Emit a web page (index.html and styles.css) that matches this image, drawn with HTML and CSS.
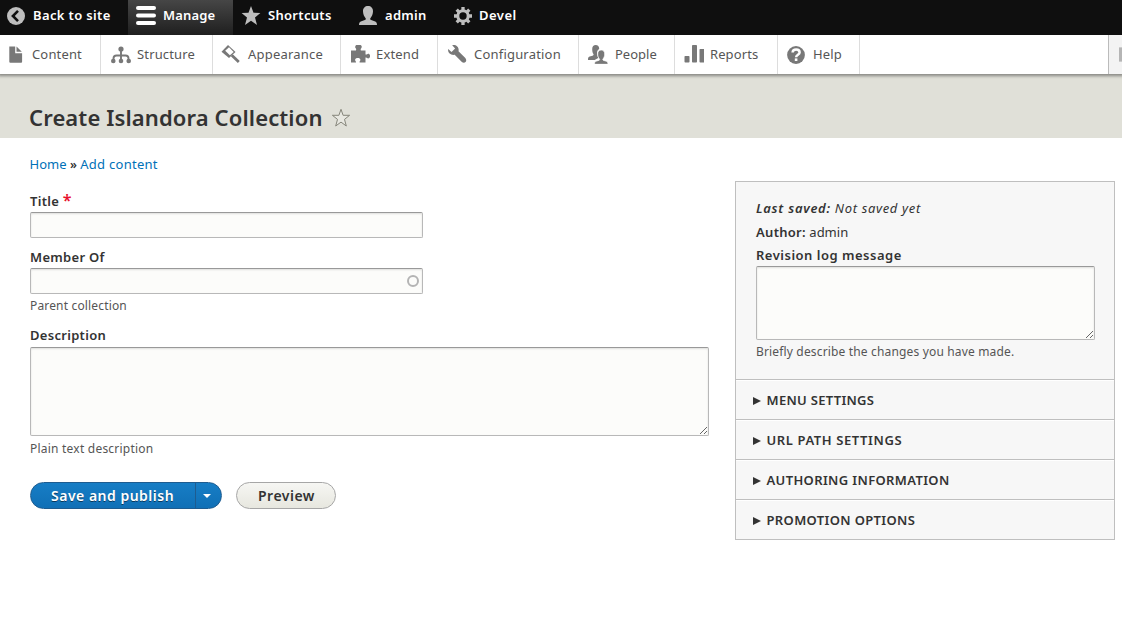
FILE: index.html
```html
<!DOCTYPE html>
<html lang="en">
<head>
<meta charset="utf-8">
<title>Create Islandora Collection</title>
<link rel="stylesheet" href="styles.css">
</head>
<body>
<nav class="bar">
  <a class="tab back"><svg class="icon" viewBox="0 0 20 20"><circle cx="10" cy="10" r="9"/><path d="M12 4.8 6.900 10l5.100 5.200" fill="none" stroke="#0f0f0f" stroke-width="2.600"/></svg><span>Back to site</span></a>
  <a class="tab manage active"><svg class="icon wide" viewBox="0 0 20 20"><rect y="0" width="20" height="4" rx="2"/><rect y="7.500" width="20" height="4" rx="2"/><rect y="15" width="20" height="4" rx="2"/></svg><span>Manage</span></a>
  <a class="tab shortcuts"><svg class="icon" viewBox="0 0 20 20"><path d="M10 0l2.500 6.800 6.900.2-5.400 4.400 2 7.600-6-4.300L4 19l2-7.600L.6 7l6.900-.2z"/></svg><span>Shortcuts</span></a>
  <a class="tab user"><svg class="icon" viewBox="0 0 20 20"><path d="M10 0c3 0 5 2 5 5.300 0 2.700-1.200 5.500-2.600 6.900-.5.800-.2 1.500.8 1.900l4 1.300c1.200.5 1.800 1.500 1.800 3.600H1c0-2.100.6-3.100 1.800-3.600l4-1.300c1-.4 1.300-1.100.8-1.900C6.200 10.800 5 8 5 5.300 5 2 7 0 10 0z"/></svg><span>admin</span></a>
  <a class="tab devel"><svg class="icon" viewBox="0 0 20 20"><circle cx="10" cy="10" r="5.200" fill="none" stroke="#bebebe" stroke-width="3"/><path d="M10 1v3.500M10 15.500V19M1 10h3.500M15.500 10H19M3.700 3.700l2.400 2.400M13.900 13.900l2.400 2.400M3.700 16.300l2.400-2.400M13.900 6.100l2.400-2.400" stroke="#bebebe" stroke-width="3.300"/></svg><span>Devel</span></a>
</nav>
<nav class="tray">
  <a class="item content"><svg class="icon" viewBox="0 0 20 20"><path d="M3.300 2.500h5.900v6.700h6.900v8.500q0 1-1 1H4.300q-1 0-1-1zM10.500 2.500l5.300 5.300h-5.300z"/></svg><span>Content</span></a>
  <a class="item structure"><svg class="icon" viewBox="0 0 20 20"><g fill="none" stroke="#787878" stroke-width="1.900"><path d="M10 5v12M2.500 17v-2.500q0-3 3-3h9q3 0 3 3V17"/></g><circle cx="10" cy="5" r="2.600"/><circle cx="2.300" cy="17" r="2.300"/><circle cx="10" cy="17" r="2.300"/><circle cx="17.700" cy="17" r="2.300"/></svg><span>Structure</span></a>
  <a class="item appearance"><svg class="icon" viewBox="0 0 20 20"><path d="M7 1l7.500 7L8 14 .5 7.700z"/><path d="M8 3.300l4.700 4.600-3.800 3.300-4.700-4.500z" fill="#fff"/><path d="M10.800 11.300l7 6.800" fill="none" stroke="#787878" stroke-width="2.800"/></svg><span>Appearance</span></a>
  <a class="item extend"><svg class="icon" viewBox="0 0 20 20"><path d="M1 6.500h4.900c.6-1.200.2-1.800-.6-2.700-.4-1 .2-2.300 1-2.800h4.300c1.200.7 1.500 2 .8 3-.7.700-1 1.600-.5 2.500h4.600v4c1.300.4 1.700-.8 2.600-.8 1.400 0 2 1.200 2 2.300s-.6 2.400-2 2.400c-.9 0-1.300-1.200-2.600-.8v4.900H9.700c-.7-1 .7-1.500.7-2.600 0-1.400-1.200-2-2.600-2s-2.700.6-2.700 2c0 1.100 1.400 1.600.8 2.600H1z"/></svg><span>Extend</span></a>
  <a class="item configuration"><svg class="icon" viewBox="0 0 20 20"><path d="M5.200 1.200c4-.9 7.200 2.200 6.300 6l6.800 6.900c2.600 3.100-.8 6.300-3.700 3.700l-6.900-7C3.800 11.700.4 8.400 1.200 5l3.300 3 3.600-3.500z"/></svg><span>Configuration</span></a>
  <a class="item people"><svg class="icon" viewBox="0 0 20 20"><path d="M4.200 5C4.200 2.400 5.600 1 7.700 1s3.600 1.400 3.500 4c-1.500.8-2.300 2.400-2.200 4.400.1 1.800.7 3.300 1.600 4.400L6.700 16H0c0-2 .4-3 1.600-3.400l3-.9c1-.3 1.200-1 .8-1.600C4.500 8.900 4.200 6.600 4.200 5z"/><path d="M13.200 6c2.200 0 3.500 1.600 3.500 4 0 2-.7 3.800-1.700 5-.4.600-.2 1.100.5 1.400l2.800.8c1 .4 1.700 1.300 1.700 3.100H6.500c0-1.800.5-2.700 1.600-3.100l2.800-.8c.8-.3.900-.8.500-1.400-1-1.200-1.700-3-1.700-5 0-2.400 1.400-4 3.500-4z" stroke="#fff" stroke-width=".7"/></svg><span>People</span></a>
  <a class="item reports"><svg class="icon" viewBox="0 0 20 20"><rect x=".5" y="12" width="5" height="6.500" rx=".8"/><rect x="8" y="1" width="5" height="17.500" rx=".8"/><rect x="15.500" y="5" width="5" height="13.500" rx=".8"/></svg><span>Reports</span></a>
  <a class="item help"><svg class="icon" viewBox="0 0 20 20"><circle cx="10" cy="11" r="8.900"/><path d="M6.600 8.500c.2-3.900 7-3.800 7 0 0 2.200-3.500 2.200-3.500 4.700" fill="none" stroke="#fff" stroke-width="2.500"/><rect x="8.800" y="14.400" width="2.600" height="2.600" fill="#fff"/></svg><span>Help</span></a>
  <div class="toggle"><div class="toggle-glyph"></div></div>
</nav>
<header class="page-header">
  <h1>Create Islandora Collection</h1>
  <svg class="fav" viewBox="0 0 20 20"><path d="M10 1.300l2.100 6h6.500l-5.100 4.100 1.800 6.600-5.300-3.900L4.700 18l1.800-6.600-5.100-4.100h6.500z" fill="#e8e8e1" stroke="#85857a" stroke-width="1"/></svg>
</header>
<div class="crumbs"><a>Home</a> <b>»</b> <a class="add">Add content</a></div>
<main class="layout">
  <form class="main">
    <label class="label title">Title <span class="required">*</span></label>
    <div class="field short"></div>
    <label class="label member">Member Of</label>
    <div class="field short auto"><i class="throbber"></i></div>
    <div class="hint parent">Parent collection</div>
    <label class="label desc">Description</label>
    <div class="field area"><svg class="grip" viewBox="0 0 9 9"><path d="M1 8l7-7M5 8l3-3"/></svg></div>
    <div class="hint plain">Plain text description</div>
    <div class="actions">
      <div class="split"><span class="save">Save and publish</span><span class="drop"><i></i></span></div>
      <div class="preview"><span>Preview</span></div>
    </div>
  </form>
  <aside class="side">
    <div class="meta">
      <p class="saved"><b>Last saved:</b> <span>Not saved yet</span></p>
      <p class="author"><b>Author:</b> admin</p>
      <label class="label log">Revision log message</label>
      <div class="field log-area"><svg class="grip" viewBox="0 0 9 9"><path d="M1 8l7-7M5 8l3-3"/></svg></div>
      <div class="hint brief">Briefly describe the changes you have made.</div>
    </div>
    <div class="group"><i></i><span class="g1">MENU SETTINGS</span></div>
    <div class="group"><i></i><span class="g2">URL PATH SETTINGS</span></div>
    <div class="group"><i></i><span class="g3">AUTHORING INFORMATION</span></div>
    <div class="group"><i></i><span class="g4">PROMOTION OPTIONS</span></div>
  </aside>
</main>
</body>
</html>
```
FILE: styles.css
```css
* { box-sizing: border-box; }
body { margin: 0; height: 617px; overflow: hidden; background: #fff; color: #333; font: 13px/20px "Noto Sans", "Open Sans", sans-serif; }
b, .label { font-weight: 700; }
span { white-space: nowrap; }
.bar { display: flex; height: 35px; background: #0f0f0f; color: #fff; font-weight: 600; }
.tab { display: flex; padding-top: 6px; height: 35px; }
.tab span { margin-top: -1px; }
.tab .icon { fill: #bebebe; }
.icon { width: 20px; height: 20px; flex: none; }
.back { width: 128px; padding-left: 6px; gap: 7px; letter-spacing: .36px; }
.manage { width: 105px; padding-left: 8px; gap: 7px; letter-spacing: .15px; }
.active { background: linear-gradient(#464646, #1f1f1f); }
.active .icon { fill: #fff; }
.shortcuts { width: 117px; padding-left: 8px; gap: 7px; letter-spacing: .3px; }
.user { width: 96px; padding-left: 8px; gap: 7px; letter-spacing: .3px; }
.devel { padding-left: 7px; gap: 6px; letter-spacing: .5px; }
.tray { display: flex; position: relative; height: 39px; background: #fff; color: #565656; box-shadow: 0 0 3px 2px rgba(0,0,0,.4); clip-path: inset(0 0 -6px 0); }
.item { display: flex; padding: 9px 0 0 10px; border-right: 1px solid #ddd; gap: 6px; letter-spacing: .15px; }
.item .icon { fill: #787878; }
.content { width: 101px; padding-left: 6px; }
.structure { width: 112px; padding-left: 10px; }
.appearance { width: 128px; padding-left: 8px; gap: 7px; letter-spacing: .2px; }
.extend { width: 97px; padding-left: 9px; }
.configuration { width: 141px; padding-left: 9px; gap: 7px; letter-spacing: .2px; }
.people { width: 96px; padding-left: 9px; gap: 7px; letter-spacing: 0; }
.reports { width: 103px; padding-left: 9px; letter-spacing: .1px; }
.help { width: 82px; padding-left: 8px; gap: 7px; }
.toggle { width: 14px; margin-left: auto; border-left: 1px solid #bbb; background: #f3f3f3; padding: 12px 0 0 10px; }
.toggle-glyph { height: 15px; background: #b5b5b5; border: 1px solid #ccc; border-width: 1px 0; }
.page-header { height: 64px; background: #e0e0d8; padding: 28px 0 0 29px; display: flex; gap: 8px; }
h1 { margin: -1px 0 0; font-size: 22px; line-height: 32px; font-weight: 600; letter-spacing: .12px; }
.fav { width: 20px; height: 20px; margin-top: 6px; }
.crumbs { padding: 16px 0 0 29.500px; height: 43px; }
.crumbs a { color: #0071b8; }
.crumbs .add { letter-spacing: .28px; }
.crumbs b { font-size: 12px; font-weight: 600; }
.layout { display: flex; justify-content: space-between; padding: 0 7px 0 30px; }
.main { width: 679px; padding-top: 10px; }
.label { display: block; height: 21px; line-height: 20px; font-weight: 600; letter-spacing: .3px; }
.required { color: #e8112d; font-size: 16px; line-height: 12px; }
.field { border: 1px solid #b8b8b8; border-top-color: #999; border-radius: 2px; background: #fcfcfa; box-shadow: inset 0 1px 2px rgba(0,0,0,.12); display: flex; justify-content: flex-end; }
.short { width: 393px; height: 26px; }
.member { margin-top: 9px; }
.auto { align-items: center; padding-right: 3px; }
.throbber { width: 12px; height: 12px; border: 2px solid #b4b4b4; border-radius: 50%; }
.hint { font-size: 12px; line-height: 20px; color: #555; letter-spacing: .16px; }
.parent { margin-top: 2px; }
.desc { margin-top: 9px; height: 22px; }
.area { height: 89px; align-items: flex-end; }
.grip { width: 9px; height: 9px; fill: none; stroke: #555; stroke-width: .9; }
.plain { margin-top: 3px; letter-spacing: .22px; }
.actions { display: flex; gap: 14px; margin-top: 23px; font-size: 14px; font-weight: 600; line-height: 25px; letter-spacing: .5px; }
.split { display: flex; width: 192px; height: 27px; border: 1px solid #1e5c90; border-radius: 14px; background: linear-gradient(#177dc5, #1070b6); color: #fff; text-shadow: 0 1px rgba(0,0,0,.5); }
.save { width: 165px; padding-left: 20px; border-right: 1px solid #1e5c90; }
.drop { padding: 11px 0 0 7px; }
.drop i { display: block; border: 4.500px solid transparent; border-top: 4px solid #fff; border-bottom: 0; }
.preview { width: 100px; height: 27px; border: 1px solid #a6a6a6; border-radius: 14px; background: linear-gradient(#f6f6f3, #e7e7df); padding-left: 21px; }
.side { width: 380px; border: 1px solid #bfbfbf; background: #f7f7f7; align-self: flex-start; }
.meta { height: 197px; padding: 16px 19px 0 20px; }
.meta p { margin: 0; }
.meta b { font-weight: 600; }
.saved { font-style: italic; height: 24px; letter-spacing: .65px; }
.saved b { letter-spacing: .75px; }
.author { height: 24px; }
.author b { letter-spacing: .3px; }
.log { height: 21px; margin-top: -1px; letter-spacing: .5px; }
.log-area { height: 74px; align-items: flex-end; }
.brief { margin-top: 2px; }
.group { height: 40px; border-top: 1px solid #bfbfbf; box-shadow: inset 0 1px #fff; display: flex; align-items: center; padding: 2px 0 0 17px; font-weight: 600; }
.group i { border: 4px solid transparent; border-left: 8px solid #333; border-right: 0; margin-right: 5.500px; }
.group span { line-height: 20px; margin-top: -2px; }
.g1 { letter-spacing: .3px; }
.g2 { letter-spacing: .6px; }
.g3 { letter-spacing: .36px; }
.g4 { letter-spacing: .35px; }
```
